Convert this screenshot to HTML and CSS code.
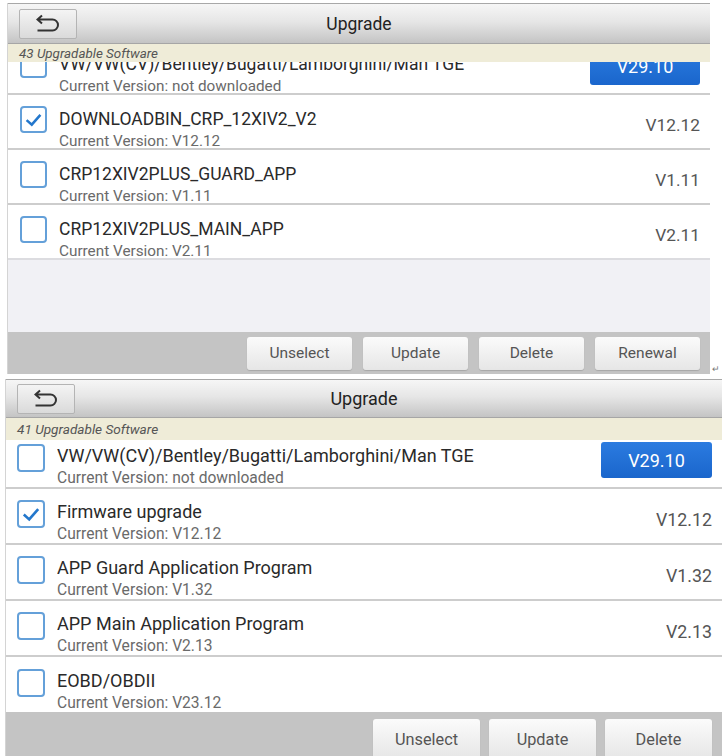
FILE: index.html
```html
<!DOCTYPE html>
<html lang="en">
<head>
  <meta charset="UTF-8">
  <meta name="viewport" content="width=device-width, initial-scale=1.0">
  <title>Upgrade</title>
  <link rel="stylesheet" href="styles.css">
</head>
<body>
  <!-- first capture: 43 items, scrolled down a bit -->
  <div class="shot shot-a">
    <div class="panel">
      <div class="header">
        <button class="back">
          <svg width="24" height="19" viewBox="0 0 24 19"><path d="M6 1.5 L1.5 5.5 L6 9.5 M1.5 5.5 H16.5 A5.5 5.5 0 0 1 16.5 16.5 H1.5" fill="none" stroke="#333" stroke-width="2"/></svg>
        </button>
        <div class="title">Upgrade</div>
      </div>
      <div class="info">43 Upgradable Software</div>
      <div class="list">
        <div class="rows">
          <div class="row">
            <span class="check"></span>
            <div class="text">
              <div class="name">VW/VW(CV)/Bentley/Bugatti/Lamborghini/Man TGE</div>
              <div class="sub">Current Version: not downloaded</div>
            </div>
            <span class="ver-btn">V29.10</span>
          </div>
          <div class="row">
            <span class="check on"><svg viewBox="0 0 20 20"><path d="M4 10.5 L8.5 14.5 L16 6" fill="none" stroke="#2377cc" stroke-width="2.2"/></svg></span>
            <div class="text">
              <div class="name">DOWNLOADBIN_CRP_12XIV2_V2</div>
              <div class="sub">Current Version: V12.12</div>
            </div>
            <span class="ver">V12.12</span>
          </div>
          <div class="row">
            <span class="check"></span>
            <div class="text">
              <div class="name">CRP12XIV2PLUS_GUARD_APP</div>
              <div class="sub">Current Version: V1.11</div>
            </div>
            <span class="ver">V1.11</span>
          </div>
          <div class="row">
            <span class="check"></span>
            <div class="text">
              <div class="name">CRP12XIV2PLUS_MAIN_APP</div>
              <div class="sub">Current Version: V2.11</div>
            </div>
            <span class="ver">V2.11</span>
          </div>
        </div>
      </div>
      <div class="actions">
        <button class="act">Unselect</button>
        <button class="act">Update</button>
        <button class="act">Delete</button>
        <button class="act">Renewal</button>
      </div>
    </div>
    <span class="mark">↵</span>
  </div>

  <!-- second capture: 41 items -->
  <div class="shot shot-b">
    <div class="panel">
      <div class="header">
        <button class="back">
          <svg width="24" height="19" viewBox="0 0 24 19"><path d="M6 1.5 L1.5 5.5 L6 9.5 M1.5 5.5 H16.5 A5.5 5.5 0 0 1 16.5 16.5 H1.5" fill="none" stroke="#333" stroke-width="2"/></svg>
        </button>
        <div class="title">Upgrade</div>
      </div>
      <div class="info">41 Upgradable Software</div>
      <div class="list">
        <div class="rows">
          <div class="row">
            <span class="check"></span>
            <div class="text">
              <div class="name">VW/VW(CV)/Bentley/Bugatti/Lamborghini/Man TGE</div>
              <div class="sub">Current Version: not downloaded</div>
            </div>
            <span class="ver-btn">V29.10</span>
          </div>
          <div class="row">
            <span class="check on"><svg viewBox="0 0 20 20"><path d="M4 10.5 L8.5 14.5 L16 6" fill="none" stroke="#2377cc" stroke-width="2.2"/></svg></span>
            <div class="text">
              <div class="name">Firmware upgrade</div>
              <div class="sub">Current Version: V12.12</div>
            </div>
            <span class="ver">V12.12</span>
          </div>
          <div class="row">
            <span class="check"></span>
            <div class="text">
              <div class="name">APP Guard Application Program</div>
              <div class="sub">Current Version: V1.32</div>
            </div>
            <span class="ver">V1.32</span>
          </div>
          <div class="row">
            <span class="check"></span>
            <div class="text">
              <div class="name">APP Main Application Program</div>
              <div class="sub">Current Version: V2.13</div>
            </div>
            <span class="ver">V2.13</span>
          </div>
          <div class="row">
            <span class="check"></span>
            <div class="text">
              <div class="name">EOBD/OBDII</div>
              <div class="sub">Current Version: V23.12</div>
            </div>
          </div>
        </div>
      </div>
      <div class="actions">
        <button class="act">Unselect</button>
        <button class="act">Update</button>
        <button class="act">Delete</button>
      </div>
    </div>
  </div>
</body>
</html>
```

FILE: styles.css
```css
* {
  box-sizing: border-box;
  margin: 0;
  padding: 0;
}

body {
  background-color: #fff;
  font-family: Roboto, "Liberation Sans", sans-serif;
  width: 726px;
  height: 756px;
  overflow: hidden;
}

.shot {
  display: flex;
  align-items: flex-end;
}

.shot-a {
  padding: 3px 0 0 7px;
  --w: 703px;
  --head: 41px;
  --info: 18px;
  --row: 55px;
  --shift: -22px;
  --list: 270px;
  --pad: 12px;
  --box: 27px;
  --text-top: 17px;
  --f-title: 17.5px;
  --f-info: 13.4px;
  --f-name: 17.5px;
  --f-sub: 15.3px;
  --f-ver: 17.3px;
  --f-act: 15.5px;
}

.shot-b {
  padding: 5px 0 0 5px;
  --w: 717px;
  --head: 39px;
  --info: 22px;
  --row: 56px;
  --shift: -7px;
  --list: 272px;
  --pad: 11px;
  --box: 28px;
  --text-top: 13px;
  --f-title: 18px;
  --f-info: 13.6px;
  --f-name: 18px;
  --f-sub: 15.6px;
  --f-ver: 17.8px;
  --f-act: 16.3px;
}

.panel {
  width: var(--w);
  border-left: 1px solid #d4d4d4;
  background-color: #f1f1f5;
}

.header {
  height: var(--head);
  display: grid;
  grid-template-columns: 1fr auto 1fr;
  align-items: center;
  border-top: 1px solid #a8a8a8;
  border-bottom: 1px solid #a6a6a6;
  background: linear-gradient(#f6f6f6, #e6e6e6 45%, #c4c4c4);
}

.back {
  width: 58px;
  height: 30px;
  margin-left: 11px;
  justify-self: start;
  display: flex;
  align-items: center;
  justify-content: center;
  border: 1px solid #b4b4b4;
  border-radius: 2px;
  background: linear-gradient(#f4f4f4, #dadada);
}

.title {
  font-size: var(--f-title);
  color: #222;
}

.info {
  height: var(--info);
  display: flex;
  align-items: center;
  padding-left: 11px;
  background-color: #efecd8;
  font-size: var(--f-info);
  font-style: italic;
  color: #555;
}

.list {
  height: var(--list);
  overflow: hidden;
}

.rows {
  margin-top: var(--shift);
  background-color: #fff;
}

.row {
  height: var(--row);
  display: flex;
  align-items: center;
  padding: 0 10px 0 var(--pad);
  border-bottom: 2px solid #cdcdcd;
}

.row:last-child {
  border-bottom: none;
}

.shot-a .row:last-child {
  border-bottom: 2px solid #dcdce0;
}

.check {
  width: var(--box);
  height: var(--box);
  flex-shrink: 0;
  border: 2px solid #64a0d9;
  border-radius: 4px;
  background-color: #fff;
  margin-right: 12px;
  margin-top: -4px;
  display: flex;
}

.check svg {
  width: 100%;
  height: 100%;
}

.text {
  flex: 1;
  margin-top: var(--text-top);
  white-space: nowrap;
  overflow: hidden;
}

.name {
  font-size: var(--f-name);
  color: #2a2a2a;
  line-height: 22px;
}

.sub {
  font-size: var(--f-sub);
  color: #6a6a6a;
  line-height: 22px;
}

.ver {
  font-size: var(--f-ver);
  color: #555;
  margin-top: 6px;
}

.ver-btn {
  width: 111px;
  height: 36px;
  flex-shrink: 0;
  display: flex;
  align-items: center;
  justify-content: center;
  border-radius: 3px;
  background: linear-gradient(#2b7be0, #1a66cc);
  color: #fff;
  font-size: 18px;
}

.shot-a .ver-btn {
  width: 110px;
}

.actions {
  height: 42px;
  display: flex;
  justify-content: flex-end;
  align-items: center;
  gap: 11px;
  padding-right: 10px;
  background-color: #c4c4c4;
}

.shot-b .actions {
  height: 44px;
  align-items: flex-start;
  gap: 9px;
  padding-top: 7px;
}

.act {
  width: 105px;
  height: 33px;
  border: none;
  border-radius: 3px;
  background: linear-gradient(#fbfbfb, #e6e6e6);
  box-shadow: 0 1px 1px rgba(0, 0, 0, 0.15);
  font-family: Roboto, "Liberation Sans", sans-serif;
  font-size: var(--f-act);
  color: #555;
}

.shot-b .act {
  width: 107px;
  height: 40px;
}

.mark {
  font-size: 9px;
  color: #777;
  margin-left: 2px;
  line-height: 1;
}
```
